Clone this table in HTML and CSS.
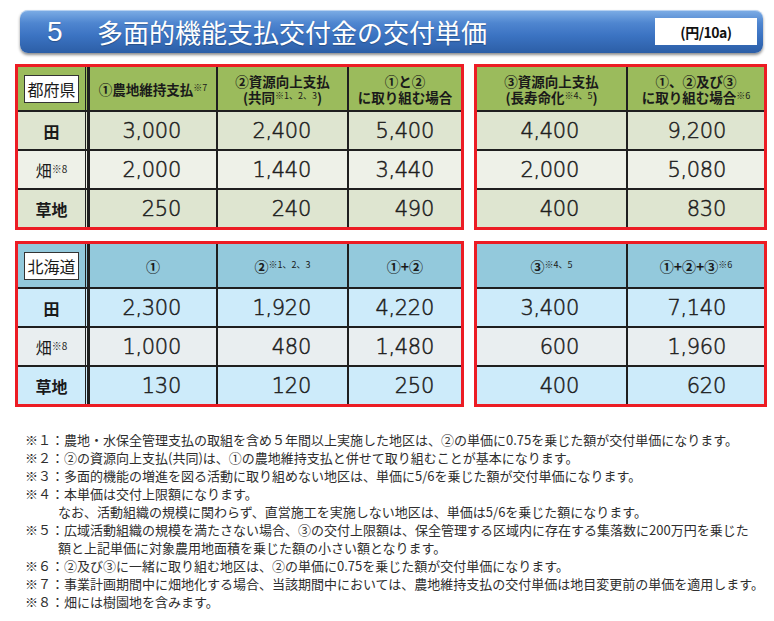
FILE: index.html
```html
<!DOCTYPE html>
<html lang="ja">
<head>
<meta charset="utf-8">
<title>多面的機能支払交付金の交付単価</title>
<link rel="stylesheet" href="styles.css">
</head>
<body>
<div class="page">
  <header class="title-bar">
    <span class="num">5</span>
    <h1 class="title">多面的機能支払交付金の交付単価</h1>
    <span class="unit">(円/10a)</span>
  </header>

  <div class="tables">
    <div class="tbl tbl-l green">
      <div class="c hd first"><span class="pref">都府県</span></div>
      <div class="c hd"><span>①農地維持支払<sup class="s">※7</sup></span></div>
      <div class="c hd"><span>②資源向上支払<br>(共同<sup class="s">※1、2、3</sup>)</span></div>
      <div class="c hd"><span>①と②<br>に取り組む場合</span></div>

      <div class="c lab first r1"><b>田</b></div>
      <div class="c v r1 p2">3,000</div>
      <div class="c v r1 p3">2,400</div>
      <div class="c v r1 p4">5,400</div>

      <div class="c lab first r2"><span>畑<sup class="s8">※8</sup></span></div>
      <div class="c v r2 p2">2,000</div>
      <div class="c v r2 p3">1,440</div>
      <div class="c v r2 p4">3,440</div>

      <div class="c lab first r1"><b>草地</b></div>
      <div class="c v r1 p2">250</div>
      <div class="c v r1 p3">240</div>
      <div class="c v r1 p4">490</div>
    </div>

    <div class="tbl tbl-r green">
      <div class="c hd"><span>③資源向上支払<br>(長寿命化<sup class="s">※4、5</sup>)</span></div>
      <div class="c hd"><span>①、②及び③<br>に取り組む場合<sup class="s">※6</sup></span></div>
      <div class="c v r1 q1">4,400</div>
      <div class="c v r1 q2">9,200</div>
      <div class="c v r2 q1">2,000</div>
      <div class="c v r2 q2">5,080</div>
      <div class="c v r1 q1">400</div>
      <div class="c v r1 q2">830</div>
    </div>

    <div class="tbl tbl-l blue">
      <div class="c hd first"><span class="pref">北海道</span></div>
      <div class="c hd hd-b"><span>①</span></div>
      <div class="c hd hd-b"><span>②<sup class="s">※1、2、3</sup></span></div>
      <div class="c hd hd-b"><span>①+②</span></div>

      <div class="c lab first r1"><b>田</b></div>
      <div class="c v r1 p2">2,300</div>
      <div class="c v r1 p3">1,920</div>
      <div class="c v r1 p4">4,220</div>

      <div class="c lab first r2"><span>畑<sup class="s8">※8</sup></span></div>
      <div class="c v r2 p2">1,000</div>
      <div class="c v r2 p3">480</div>
      <div class="c v r2 p4">1,480</div>

      <div class="c lab first r1"><b>草地</b></div>
      <div class="c v r1 p2">130</div>
      <div class="c v r1 p3">120</div>
      <div class="c v r1 p4">250</div>
    </div>

    <div class="tbl tbl-r blue">
      <div class="c hd hd-b"><span>③<sup class="s">※4、5</sup></span></div>
      <div class="c hd hd-b"><span>①+②+③<sup class="s">※6</sup></span></div>
      <div class="c v r1 q1">3,400</div>
      <div class="c v r1 q2">7,140</div>
      <div class="c v r2 q1">600</div>
      <div class="c v r2 q2">1,960</div>
      <div class="c v r1 q1">400</div>
      <div class="c v r1 q2">620</div>
    </div>
  </div>

  <div class="notes">
    <p class="note">※１：農地・水保全管理支払の取組を含め５年間以上実施した地区は、②の単価に0.75を乗じた額が交付単価になります。</p>
    <p class="note">※２：②の資源向上支払(共同)は、①の農地維持支払と併せて取り組むことが基本になります。</p>
    <p class="note">※３：多面的機能の増進を図る活動に取り組めない地区は、単価に5/6を乗じた額が交付単価になります。</p>
    <p class="note">※４：本単価は交付上限額になります。</p>
    <p class="note cont">なお、活動組織の規模に関わらず、直営施工を実施しない地区は、単価は5/6を乗じた額になります。</p>
    <p class="note">※５：広域活動組織の規模を満たさない場合、③の交付上限額は、保全管理する区域内に存在する集落数に200万円を乗じた</p>
    <p class="note cont">額と上記単価に対象農用地面積を乗じた額の小さい額となります。</p>
    <p class="note">※６：②及び③に一緒に取り組む地区は、②の単価に0.75を乗じた額が交付単価になります。</p>
    <p class="note">※７：事業計画期間中に畑地化する場合、当該期間中においては、農地維持支払の交付単価は地目変更前の単価を適用します。</p>
    <p class="note">※８：畑には樹園地を含みます。</p>
  </div>
</div>
</body>
</html>
```

FILE: styles.css
```css
html, body {
  margin: 0;
  padding: 0;
  background: #ffffff;
}

body {
  font-family: "Noto Sans CJK JP", "Noto Sans", sans-serif;
  color: #222;
}

.page {
  width: 774px;
  padding-top: 10px;
}

/* ---------- title bar ---------- */
.title-bar {
  display: flex;
  align-items: center;
  height: 43px;
  margin-left: 20px;
  width: 743px;
  box-sizing: border-box;
  border-radius: 8px;
  background: linear-gradient(to bottom, #7eaee6 0%, #4f86d0 30%, #3b73c2 60%, #2c5ea6 100%);
  box-shadow: 0 2px 3px rgba(0, 0, 0, 0.45), inset 0 1px 0 rgba(255, 255, 255, 0.45);
  padding-left: 27px;
  padding-right: 6px;
  color: #fff;
}

.num {
  font-family: "Liberation Sans", Arial, sans-serif;
  font-size: 28px;
  line-height: 1;
  width: 50px;
  text-shadow: 0 1px 1px rgba(0, 0, 0, 0.25);
}

.title {
  margin: 0;
  font-size: 26px;
  font-weight: 400;
  line-height: 1;
  text-shadow: 0 1px 1px rgba(0, 0, 0, 0.25);
}

.unit {
  margin-left: auto;
  width: 102px;
  height: 27px;
  background: #fff;
  color: #111;
  font-size: 14px;
  font-weight: 700;
  display: flex;
  align-items: center;
  justify-content: center;
  letter-spacing: -0.5px;
}

/* ---------- tables ---------- */
.tables {
  display: grid;
  grid-template-columns: 449px 293px;
  column-gap: 10px;
  row-gap: 11px;
  margin-left: 15px;
  margin-top: 11px;
}

.tbl {
  display: grid;
  grid-template-rows: 43px 37px 37px 37px;
  gap: 2px;
  background: #1f1f1f;
  border: 3px solid #ec1c24;
}

.tbl-l {
  grid-template-columns: 70px 126px 129px 112px;
}

.tbl-r {
  grid-template-columns: 149px 136px;
}

.c {
  display: flex;
  align-items: center;
  justify-content: center;
  text-align: center;
  box-sizing: border-box;
}

.first {
  border-right: 3px double #1f1f1f;
}

.green .hd { background: #9bbb5c; }
.green .r1 { background: #dee5d0; }
.green .r2 { background: #eef1e8; }

.blue .hd { background: #93c9dc; }
.blue .r1 { background: #cdebfa; }
.blue .r2 { background: #e9eef0; }

.hd {
  font-size: 13.5px;
  font-weight: 700;
  line-height: 16px;
  color: #1a1a1a;
}

.hd-b {
  font-size: 14px;
}

.s {
  font-size: 9px;
  font-weight: 400;
  line-height: 0;
  vertical-align: 4px;
}

.s8 {
  font-size: 10px;
  line-height: 0;
  vertical-align: 4px;
}

.pref {
  display: inline-block;
  background: #fff;
  border: 1px solid #333;
  font-weight: 400;
  font-size: 16px;
  line-height: 26px;
  padding: 0 2px;
}

.lab {
  font-size: 16px;
  color: #1a1a1a;
}

.v {
  justify-content: flex-end;
  font-family: "DejaVu Sans", sans-serif;
  font-weight: 200;
  font-size: 21px;
  color: #1e1e1e;
  -webkit-text-stroke: 0.5px #1e1e1e;
  letter-spacing: -0.3px;
}

.p2 { padding-right: 35px; }
.p3 { padding-right: 36px; }
.p4 { padding-right: 27px; }
.q1 { padding-right: 47px; }
.q2 { padding-right: 38px; }

/* ---------- notes ---------- */
.notes {
  margin-top: 24px;
  margin-left: 25px;
  font-size: 13px;
  line-height: 18px;
  color: #2e2e2e;
}

.note {
  margin: 0;
  white-space: nowrap;
}

.cont {
  padding-left: 33px;
}
```
